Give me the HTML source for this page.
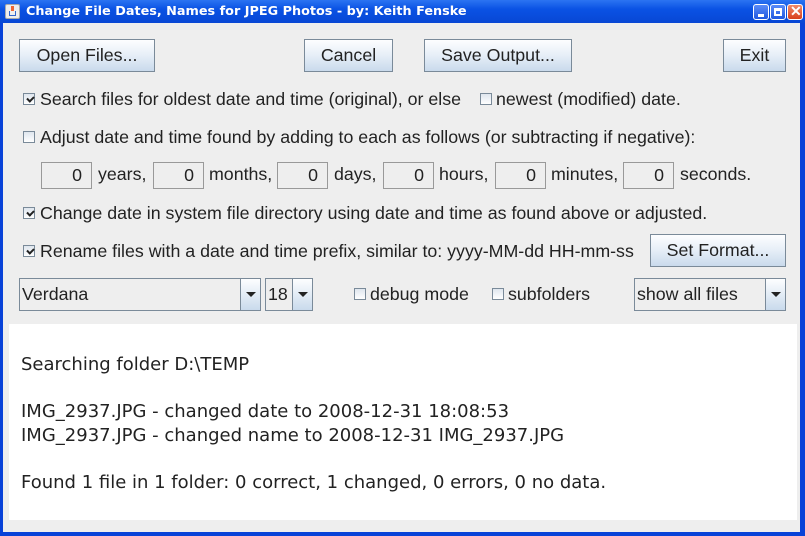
<!DOCTYPE html><html><head><style>
*{box-sizing:border-box;margin:0;padding:0}
body{width:805px;height:536px;overflow:hidden;background:#0842d8;font-family:"Liberation Sans",sans-serif;position:relative}
.a{position:absolute}
#tb{left:0;top:0;width:805px;height:23px;background:linear-gradient(#2b74f2,#0a52e4 40%,#0847d4);color:#fff;font:bold 12.8px "DejaVu Sans",sans-serif;}
#body{left:3px;top:23px;width:797px;height:509px;background:#eeeeee}
.btn{position:absolute;height:33px;border:1px solid #7a8a99;background:linear-gradient(#fdfeff,#e6eef7 50%,#c9daec);font-size:17.8px;color:#222;text-align:center;line-height:31px}
.t{position:absolute;font-size:17.8px;color:#222;white-space:nowrap}
.cb{position:absolute;width:12px;height:12px;border:1px solid #7a8a99;background:linear-gradient(#dfe6ee,#fff)}
.cb.k::after{content:"";position:absolute;left:3px;top:2px;width:5px;height:3px;border-left:2px solid #222;border-bottom:2px solid #222;transform:rotate(-45deg)}
.tf{position:absolute;top:162px;height:27px;width:51px;border:1px solid #999;background:#eee;font-size:17.8px;text-align:right;padding-right:9px;line-height:25px;color:#222}
.cmb{position:absolute;top:278px;height:33px;border:1px solid #7a8a99;background:#eee;font-size:17.8px;line-height:31px;padding-left:2px;color:#222}
.ar{position:absolute;right:0;top:0;width:20px;height:31px;border-left:1px solid #7a8a99;background:linear-gradient(#fdfeff,#c9daec)}
.ar::after{content:"";position:absolute;left:5px;top:13px;border:5px solid transparent;border-top:5px solid #222;border-bottom:0}
#ta{left:9px;top:324px;width:788px;height:196px;background:#fff;font:18px "DejaVu Sans",sans-serif;color:#222;padding:29px 0 0 12px;line-height:23.5px}
.wb{position:absolute;top:4px;width:16px;height:16px;border:1px solid #fff;border-radius:3px;background:linear-gradient(#5a8cf8,#2058e0)}
</style></head><body>
<div id="tb" class="a"><div class="a" style="left:5px;top:4px;width:15px;height:15px;background:#eee;border:1px solid #aaa;border-radius:2px"><div class="a" style="left:3px;top:6px;width:7px;height:5px;border:1px solid #36c;border-top:0"></div><div class="a" style="left:5px;top:1px;width:3px;height:5px;background:#e63"></div></div><span class="a" style="left:26px;top:4px">Change File Dates, Names for JPEG Photos - by: Keith Fenske</span>
<div class="wb" style="left:753px"><div class="a" style="left:4px;top:9px;width:6px;height:3px;background:#fff"></div></div>
<div class="wb" style="left:770px"><div class="a" style="left:3px;top:3px;width:8px;height:8px;border:2px solid #fff;border-top-width:3px"></div></div>
<div class="wb" style="left:787px;background:linear-gradient(#f08a6a,#d8401c)"><span class="a" style="left:2px;top:-2px;color:#fff;font:bold 14px sans-serif">✕</span></div>
</div>
<div id="body" class="a"></div>
<div class="btn" style="left:19px;top:39px;width:136px">Open Files...</div>
<div class="btn" style="left:304px;top:39px;width:89px">Cancel</div>
<div class="btn" style="left:424px;top:39px;width:148px">Save Output...</div>
<div class="btn" style="left:723px;top:39px;width:63px">Exit</div>
<div class="cb k" style="left:23px;top:93px"></div><div class="t" style="left:40px;top:89px">Search files for oldest date and time (original), or else</div>
<div class="cb" style="left:480px;top:93px"></div><div class="t" style="left:496px;top:89px">newest (modified) date.</div>
<div class="cb" style="left:23px;top:131px"></div><div class="t" style="left:40px;top:127px">Adjust date and time found by adding to each as follows (or subtracting if negative):</div>
<div class="tf" style="left:41px">0</div><div class="t" style="left:98px;top:164px">years,</div>
<div class="tf" style="left:153px">0</div><div class="t" style="left:209px;top:164px">months,</div>
<div class="tf" style="left:277px">0</div><div class="t" style="left:334px;top:164px">days,</div>
<div class="tf" style="left:383px">0</div><div class="t" style="left:439px;top:164px">hours,</div>
<div class="tf" style="left:495px">0</div><div class="t" style="left:551px;top:164px">minutes,</div>
<div class="tf" style="left:623px">0</div><div class="t" style="left:680px;top:164px">seconds.</div>
<div class="cb k" style="left:23px;top:207px"></div><div class="t" style="left:40px;top:203px">Change date in system file directory using date and time as found above or adjusted.</div>
<div class="cb k" style="left:23px;top:245px"></div><div class="t" style="left:40px;top:241px">Rename files with a date and time prefix, similar to: yyyy-MM-dd HH-mm-ss</div>
<div class="btn" style="left:650px;top:234px;width:136px">Set Format...</div>
<div class="cmb" style="left:19px;width:242px">Verdana<div class="ar"></div></div>
<div class="cmb" style="left:265px;width:48px">18<div class="ar"></div></div>
<div class="cb" style="left:354px;top:288px"></div><div class="t" style="left:370px;top:284px">debug mode</div>
<div class="cb" style="left:492px;top:288px"></div><div class="t" style="left:508px;top:284px">subfolders</div>
<div class="cmb" style="left:634px;width:152px">show all files<div class="ar"></div></div>
<div id="ta" class="a">Searching folder D:\TEMP<br><br>IMG_2937.JPG - changed date to 2008-12-31 18:08:53<br>IMG_2937.JPG - changed name to 2008-12-31 IMG_2937.JPG<br><br>Found 1 file in 1 folder: 0 correct, 1 changed, 0 errors, 0 no data.</div>
</body></html>
